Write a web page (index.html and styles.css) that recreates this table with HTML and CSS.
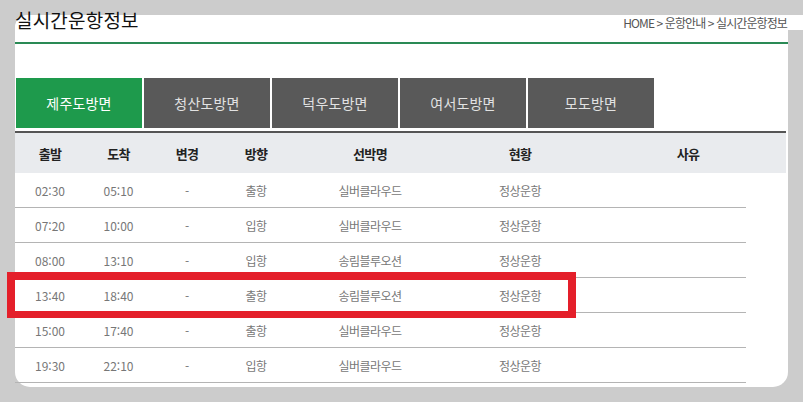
FILE: index.html
```html
<!DOCTYPE html>
<html lang="ko">
<head>
<meta charset="utf-8">
<link rel="stylesheet" href="styles.css">
</head>
<body>
<div class="card">
  <div class="head">
    <h1 class="title">실시간운항정보</h1>
    <div class="crumb">HOME &gt; 운항안내 &gt; 실시간운항정보</div>
  </div>
  <div class="tabs">
    <div class="tab active">제주도방면</div>
    <div class="tab">청산도방면</div>
    <div class="tab">덕우도방면</div>
    <div class="tab">여서도방면</div>
    <div class="tab">모도방면</div>
  </div>
  <div class="table">
    <div class="thead">
      <div>출발</div><div>도착</div><div>변경</div><div>방향</div><div>선박명</div><div>현황</div><div>사유</div>
    </div>
    <div class="row"><div class="num">02:30</div><div class="num">05:10</div><div class="num">-</div><div class="ko">출항</div><div class="ko">실버클라우드</div><div class="ko">정상운항</div><div></div></div>
    <div class="row"><div class="num">07:20</div><div class="num">10:00</div><div class="num">-</div><div class="ko">입항</div><div class="ko">실버클라우드</div><div class="ko">정상운항</div><div></div></div>
    <div class="row"><div class="num">08:00</div><div class="num">13:10</div><div class="num">-</div><div class="ko">입항</div><div class="ko">송림블루오션</div><div class="ko">정상운항</div><div></div></div>
    <div class="row"><div class="num">13:40</div><div class="num">18:40</div><div class="num">-</div><div class="ko">출항</div><div class="ko">송림블루오션</div><div class="ko">정상운항</div><div></div></div>
    <div class="row"><div class="num">15:00</div><div class="num">17:40</div><div class="num">-</div><div class="ko">출항</div><div class="ko">실버클라우드</div><div class="ko">정상운항</div><div></div></div>
    <div class="row"><div class="num">19:30</div><div class="num">22:10</div><div class="num">-</div><div class="ko">입항</div><div class="ko">실버클라우드</div><div class="ko">정상운항</div><div></div></div>
  </div>
  <div class="highlight"></div>
</div>
</body>
</html>
```

FILE: styles.css
```css
html, body {
  margin: 0;
  padding: 0;
}
body {
  background: #cccccc;
  padding: 15px 0 0 15px;
  font-family: "Noto Sans CJK KR", "Malgun Gothic", sans-serif;
  height: 402px;
  box-sizing: border-box;
  overflow: hidden;
}
.card {
  display: flow-root;
  position: relative;
  width: 773px;
  height: 372px;
  background: #fff;
  border-radius: 12px 0 15px 15px;
}
.card::after {
  content: "";
  position: absolute;
  top: 0;
  right: -15px;
  width: 15px;
  height: 15px;
  background: #fff;
}
.head {
  display: flex;
  justify-content: space-between;
  align-items: flex-start;
  margin-top: -9px;
  height: 36px;
  border-bottom: 2px solid #2a8a55;
  position: relative;
  z-index: 1;
}
.title {
  margin: 0;
  font-size: 19px;
  font-weight: normal;
  letter-spacing: 0.2px;
  color: #111;
  line-height: 28px;
}
.crumb {
  font-size: 12px;
  letter-spacing: -0.9px;
  color: #555;
  line-height: 16px;
  margin-top: 9px;
  margin-right: 1px;
}
.tabs {
  display: flex;
  gap: 2px;
  margin-top: 34px;
  padding-left: 1px;
}
.tab {
  width: 126px;
  height: 50px;
  background: #595959;
  color: #e2e2e2;
  font-size: 14px;
  letter-spacing: 0.2px;
  display: flex;
  align-items: center;
  justify-content: center;
}
.tab.active {
  background: #1e9a4c;
  color: #fff;
}
.table {
  margin-top: 3px;
}
.thead, .row {
  display: grid;
  grid-template-columns: 70px 67px 70px 68px 160px 140px 196px;
  align-items: center;
  text-align: center;
}
.thead {
  width: 771px;
  height: 42px;
  box-sizing: border-box;
  border-top: 2px solid #555;
  background: #e9ebee;
  font-size: 13px;
  font-weight: bold;
  color: #222;
  letter-spacing: -0.6px;
}
.row {
  width: 731px;
  grid-template-columns: 70px 67px 70px 68px 160px 140px 156px;
  height: 35px;
  box-sizing: border-box;
  border-bottom: 1px solid #b4b4b4;
  font-size: 12px;
  color: #777;
}
.row .ko {
  letter-spacing: -0.5px;
}
.highlight {
  position: absolute;
  left: -8px;
  top: 257px;
  width: 569px;
  height: 46px;
  box-sizing: border-box;
  border: 8px solid #e41f2a;
  border-bottom-width: 7px;
}
```
